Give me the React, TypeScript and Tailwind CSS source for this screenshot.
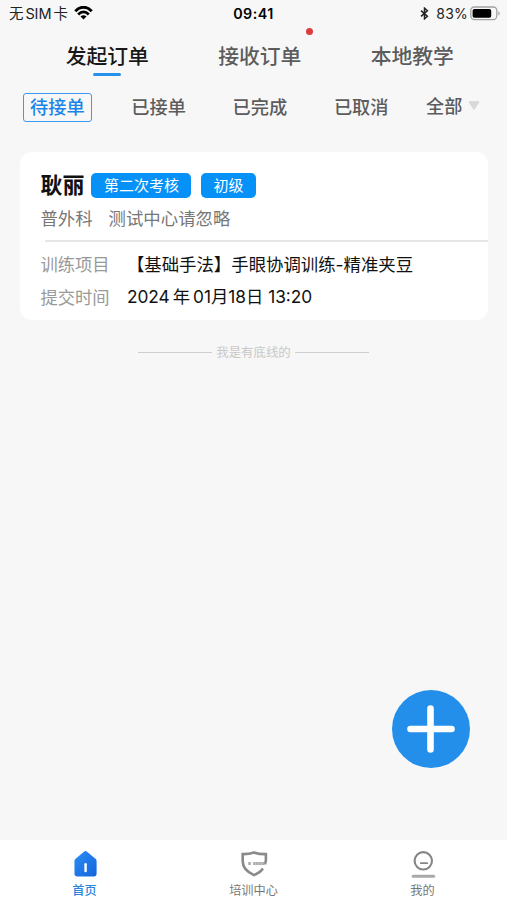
import { useState } from "react"
import clsx from "clsx"

const tabs = [
  { name: "发起订单", hasDot: false },
  { name: "接收订单", hasDot: true },
  { name: "本地教学", hasDot: false },
]

const filters = ["待接单", "已接单", "已完成", "已取消"]

function StatusBar() {
  return (
    <div className="flex h-7 items-center justify-between pl-[9px] pr-[6px] text-[14.5px] leading-7 text-[#222]">
      <div className="flex w-[200px] items-center">
        <span className="whitespace-nowrap tracking-[-0.1px]">无<span className="px-[2px]">SIM</span>卡</span>
        <svg width="19" height="14" viewBox="0 0 19 14" className="-mt-[2px] ml-[6px]">
          <path d="M1.3 5.2C6-0.1 13-0.1 17.7 5.2" fill="none" stroke="#000" strokeWidth="2.9" />
          <path d="M4.2 8.5C7.4 5 11.6 5 14.8 8.5" fill="none" stroke="#000" strokeWidth="2.7" />
          <path d="M9.5 13.4 6.5 10.6C8.3 8.9 10.7 8.9 12.5 10.6Z" fill="#000" />
        </svg>
      </div>
      <span className="mr-[3px] text-[14.3px] font-semibold tracking-[0.5px] text-black">09:41</span>
      <div className="flex w-[200px] items-center justify-end">
        <svg width="9" height="13" viewBox="0 0 9 13" className="-mt-px mr-[7px]">
          <path d="M1 3.6 7.4 9.2 4.5 11.8V1.2L7.4 3.8 1 9.4" fill="none" stroke="#222" strokeWidth="1.5" />
        </svg>
        <span className="text-[14px] tracking-[0.2px]">83%</span>
        <svg width="31" height="15" viewBox="0 0 31 15" className="-mt-[2px] ml-[2px]">
          <rect x="0.8" y="1" width="26" height="12.6" rx="3.5" fill="none" stroke="#a3a3a3" strokeWidth="1.3" />
          <rect x="2.6" y="2.9" width="18.6" height="8.8" rx="1.8" fill="#000" />
          <path d="M28.3 5.2C30.3 6 30.3 8.6 28.3 9.4Z" fill="#a3a3a3" />
        </svg>
      </div>
    </div>
  )
}

function OrderCard() {
  return (
    <div className="ml-[20.4px] mr-[19px] mt-[26px] h-[168px] rounded-[12px] bg-white pl-5 pt-[20px]">
      <div className="flex h-[26px] items-center text-[15px] text-white">
        <h3 className="mr-[7px] text-[22px] font-bold leading-[26px] text-[#111]">耿丽</h3>
        <span className="mr-[9.5px] flex h-[25px] w-[100px] items-center justify-center rounded-[5px] bg-[#0591f8] pt-[2px]">第二次考核</span>
        <span className="flex h-[25px] w-[55px] items-center justify-center rounded-[5px] bg-[#0591f8] pt-[2px]">初级</span>
      </div>
      <div className="mt-[9px] flex gap-[16px] text-[17.4px] leading-6 text-[#777]">
        <span>普外科</span>
        <span>测试中心请忽略</span>
      </div>
      <div className="ml-[5px] mt-[9px] h-[2px] bg-[#e6e6e6]" />
      <div className="mt-[11px] flex text-[17.4px] leading-6 text-[#111]">
        <span className="w-[86.5px] text-[17.3px] text-[#999]">训练项目</span>
        <span>【基础手法】手眼协调训练-精准夹豆</span>
      </div>
      <div className="mt-[9px] flex text-[17.3px] leading-6 text-[#111]">
        <span className="w-[86.5px] text-[#999]">提交时间</span>
        <span className="-mt-px">2024<span className="px-[3px]">年</span>01月18日 13:20</span>
      </div>
    </div>
  )
}

function HomeIcon() {
  return (
    <svg width="28" height="30" viewBox="0 0 28 30">
      <defs>
        <linearGradient id="home" x1="0" y1="0" x2="1" y2="1">
          <stop offset="0" stopColor="#2d8df5" />
          <stop offset="1" stopColor="#1464dc" />
        </linearGradient>
      </defs>
      <path d="M13.2 1.6Q14.5 0.7 15.8 1.6L24.8 9Q26 10 26 11.5V24.8Q26 27.3 23.5 27.3H5.6Q3.1 27.3 3.1 24.8V11.5Q3.1 10 4.3 9Z" fill="url(#home)" />
      <path d="M14.6 14.8V21.8" stroke="#fff" strokeWidth="2.5" strokeLinecap="round" />
    </svg>
  )
}

function ShieldIcon() {
  return (
    <svg width="28" height="30" viewBox="0 0 28 30" fill="none" stroke="#8a8a8a">
      <path d="M25.2 14.8 26.3 11V4.3C21 4.4 17.8 3.9 14 2.6 10.2 3.9 7 4.4 2.3 4.3V11.5C2.3 18 6 22.6 14 26 18.4 24.2 21.4 22 23.2 19.2" strokeWidth="2.7" />
      <path d="M8 14H11M13 14H25" stroke="#b0b0b0" strokeWidth="3" strokeDasharray="2.7 0.2" />
    </svg>
  )
}

function MineIcon() {
  return (
    <svg width="28" height="30" viewBox="0 0 28 30" fill="none" stroke="#858585">
      <circle cx="14.3" cy="11.2" r="9" strokeWidth="2.2" />
      <path d="M11.8 13.6H18.3" strokeWidth="2" strokeLinecap="round" />
      <path d="M3.9 27.2H25" stroke="#a9a9a9" strokeWidth="3.2" strokeLinecap="round" />
    </svg>
  )
}

const navItems = [
  { name: "首页", icon: <HomeIcon /> },
  { name: "培训中心", icon: <ShieldIcon /> },
  { name: "我的", icon: <MineIcon /> },
]

export default function App() {
  const [activeTab, setActiveTab] = useState(0)
  const [activeFilter, setActiveFilter] = useState(0)
  const [activeNav, setActiveNav] = useState(0)

  return (
    <div className="flex h-[900px] w-[507px] flex-col overflow-hidden bg-[#f7f7f7] font-['Inter','Noto_Sans_CJK_SC',sans-serif]">
      <StatusBar />

      <div className="ml-[31px] flex h-[50px]">
        {tabs.map((tab, i) => (
          <button
            key={tab.name}
            onClick={() => setActiveTab(i)}
            className={clsx(
              "flex w-[152.5px] shrink-0 flex-col items-center pt-[14px] text-[20.8px] font-medium leading-[30px]",
              i === activeTab ? "text-[#181818]" : "text-[#5c5c5c]"
            )}
          >
            <span className="relative">
              {tab.name}
              {tab.hasDot && <span className="absolute -top-[14.5px] right-[-12px] h-[7.5px] w-[7.5px] rounded-full bg-[#dc3c3f]" />}
            </span>
            {i === activeTab && <span className="mt-px h-[3px] w-[28px] rounded-full bg-[#2690ed]" />}
          </button>
        ))}
      </div>

      <div className="flex h-[48px] items-center pl-[22.8px] pt-[10px]">
        {filters.map((name, i) => (
          <button
            key={name}
            onClick={() => setActiveFilter(i)}
            className={clsx(
              "mr-[32.3px] flex h-[29px] w-[69px] shrink-0 items-center justify-center rounded-[3px] border-[1.5px] pt-[2px] text-[18.2px] font-medium",
              i === activeFilter ? "border-[#3d9af0] text-[#1a85e8]" : "border-transparent text-[#5c5c5c]"
            )}
          >
            {name}
          </button>
        ))}
        <button className="-ml-[2px] flex items-center gap-[6px] text-[18.2px] font-medium text-[#5c5c5c]">
          全部
          <svg width="12" height="10" viewBox="0 0 12 10" className="-mt-[2px]">
            <path d="M1 0.8H11L6 8.6Z" fill="#d8d8d8" stroke="#d8d8d8" strokeLinejoin="round" />
          </svg>
        </button>
      </div>

      <OrderCard />

      <div className="mt-[22px] flex h-5 items-center justify-center gap-[4px] text-[12.4px] text-[#c8c8c8]">
        <span className="h-px w-[74px] bg-[#cfcfcf]" />
        <span className="pt-[2px]">我是有底线的</span>
        <span className="h-px w-[74px] bg-[#cfcfcf]" />
      </div>

      <button className="mb-[72px] mr-[37px] mt-auto flex h-[78px] w-[78px] shrink-0 items-center justify-center self-end rounded-full bg-[#238fea]">
        <svg width="48" height="48" viewBox="0 0 48 48">
          <path d="M23.5 3.5V44.5M3.5 24H44.5" stroke="#fff" strokeWidth="6.6" strokeLinecap="round" />
        </svg>
      </button>

      <div className="flex h-[60px] shrink-0 bg-white">
        {navItems.map((item, i) => (
          <button
            key={item.name}
            onClick={() => setActiveNav(i)}
            className={clsx(
              "flex flex-1 flex-col items-center pt-[10px] text-[12.2px] leading-[18px]",
              i === activeNav ? "font-medium text-[#2b84dc]" : "text-[#777]"
            )}
          >
            {item.icon}
            <span className="mt-[3px]">{item.name}</span>
          </button>
        ))}
      </div>
    </div>
  )
}
